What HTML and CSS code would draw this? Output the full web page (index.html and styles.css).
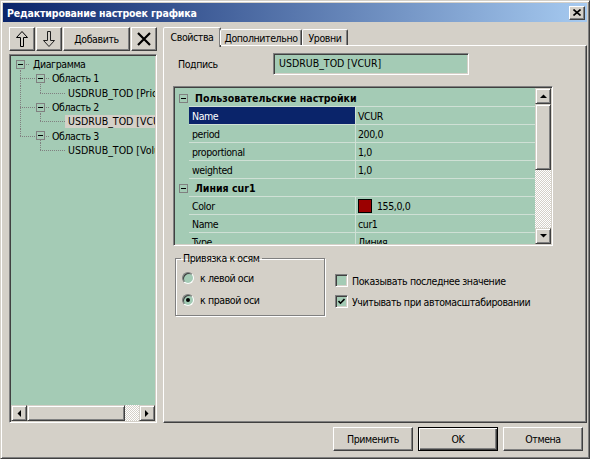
FILE: index.html
```html
<!DOCTYPE html>
<html>
<head>
<meta charset="utf-8">
<link rel="stylesheet" href="styles.css">
</head>
<body>
<div class="window">
  <div class="titlebar">
    <span class="title">Редактирование настроек графика</span>
    <button class="close" type="button">
      <svg width="8" height="7" viewBox="0 0 8 7"><path d="M0.5 0.5 L7.5 6.5 M7.5 0.5 L0.5 6.5" stroke="#000" stroke-width="1.6" fill="none"/></svg>
    </button>
  </div>

  <div class="main">
    <div class="left">
      <div class="toolbar">
        <button class="btn tb-icon" type="button">
          <svg width="12" height="16" viewBox="0 0 12 16"><polygon points="6,0.5 11.5,6.5 7.5,6.5 7.5,15.5 4.5,15.5 4.5,6.5 0.5,6.5" fill="none" stroke="#000" stroke-width="1"/></svg>
        </button>
        <button class="btn tb-icon" type="button">
          <svg width="12" height="16" viewBox="0 0 12 16"><polygon points="6,15.5 11.5,9.5 7.5,9.5 7.5,0.5 4.5,0.5 4.5,9.5 0.5,9.5" fill="none" stroke="#202020" stroke-width="1"/></svg>
        </button>
        <button class="btn tb-add" type="button">Добавить</button>
        <button class="btn tb-icon" type="button">
          <svg width="14" height="14" viewBox="0 0 14 14"><path d="M1 1 L13 13 M13 1 L1 13" stroke="#000" stroke-width="2.2" fill="none"/></svg>
        </button>
      </div>

      <div class="tree">
        <div class="tree-rows">
          <div class="trow">
            <span class="c0 t-rootexp"><span class="exp"></span></span>
            <span class="ttext root">Диаграмма</span>
          </div>
          <div class="trow">
            <span class="c0 t-tee"></span>
            <span class="c1 t-hexp"><span class="exp"></span></span>
            <span class="ttext">Область 1</span>
          </div>
          <div class="trow">
            <span class="c0 t-v"></span>
            <span class="c1 t-corner"></span>
            <span class="ch t-h"></span>
            <span class="ttext leaf">USDRUB_TOD [Price]</span>
          </div>
          <div class="trow">
            <span class="c0 t-tee"></span>
            <span class="c1 t-hexp"><span class="exp"></span></span>
            <span class="ttext">Область 2</span>
          </div>
          <div class="trow">
            <span class="c0 t-v"></span>
            <span class="c1 t-corner"></span>
            <span class="ch t-h"></span>
            <span class="ttext leaf sel">USDRUB_TOD [VCUR]</span>
          </div>
          <div class="trow">
            <span class="c0 t-corner0"></span>
            <span class="c1 t-hexp"><span class="exp"></span></span>
            <span class="ttext">Область 3</span>
          </div>
          <div class="trow">
            <span class="c0"></span>
            <span class="c1 t-corner"></span>
            <span class="ch t-h"></span>
            <span class="ttext leaf">USDRUB_TOD [Volume]</span>
          </div>
        </div>
        <div class="hscroll">
          <span class="sbtn"><svg width="4" height="7" viewBox="0 0 4 7"><polygon points="4,0 4,7 0.5,3.5" fill="#000"/></svg></span>
          <span class="hthumb"></span>
          <span class="track"></span>
          <span class="sbtn"><svg width="4" height="7" viewBox="0 0 4 7"><polygon points="0,0 0,7 3.5,3.5" fill="#000"/></svg></span>
        </div>
      </div>
    </div>

    <div class="right">
      <div class="tabs">
        <span class="tab active">Свойства</span>
        <span class="tab t2">Дополнительно</span>
        <span class="tab t3">Уровни</span>
      </div>
      <div class="panel">
        <div class="caption-row">
          <span class="label">Подпись</span>
          <div class="textbox">USDRUB_TOD [VCUR]</div>
        </div>

        <div class="grid">
          <div class="grid-body">
            <div class="prow cat">
              <span class="gutter"><span class="exp"></span></span>
              <span class="cat-name">Пользовательские настройки</span>
            </div>
            <div class="prow">
              <span class="gutter"></span>
              <span class="pname selected">Name</span>
              <span class="pval">VCUR</span>
            </div>
            <div class="prow">
              <span class="gutter"></span>
              <span class="pname">period</span>
              <span class="pval">200,0</span>
            </div>
            <div class="prow">
              <span class="gutter"></span>
              <span class="pname">proportional</span>
              <span class="pval">1,0</span>
            </div>
            <div class="prow">
              <span class="gutter"></span>
              <span class="pname">weighted</span>
              <span class="pval">1,0</span>
            </div>
            <div class="prow cat">
              <span class="gutter"><span class="exp"></span></span>
              <span class="cat-name">Линия cur1</span>
            </div>
            <div class="prow">
              <span class="gutter"></span>
              <span class="pname">Color</span>
              <span class="pval"><span class="swatch"></span>155,0,0</span>
            </div>
            <div class="prow">
              <span class="gutter"></span>
              <span class="pname">Name</span>
              <span class="pval">cur1</span>
            </div>
            <div class="prow">
              <span class="gutter"></span>
              <span class="pname">Type</span>
              <span class="pval">Линия</span>
            </div>
          </div>
          <div class="vscroll">
            <span class="sbtn"><svg width="7" height="4" viewBox="0 0 7 4"><polygon points="0,4 7,4 3.5,0.5" fill="#000"/></svg></span>
            <span class="vthumb"></span>
            <span class="track"></span>
            <span class="sbtn"><svg width="7" height="4" viewBox="0 0 7 4"><polygon points="0,0 7,0 3.5,3.5" fill="#000"/></svg></span>
          </div>
        </div>

        <div class="options">
          <fieldset class="group">
            <legend>Привязка к осям</legend>
            <div class="opt"><span class="radio"></span><span>к левой оси</span></div>
            <div class="opt"><span class="radio checked"></span><span>к правой оси</span></div>
          </fieldset>
          <div class="checks">
            <div class="opt"><span class="check"></span><span>Показывать последнее значение</span></div>
            <div class="opt"><span class="check">
              <svg width="7" height="7" viewBox="0 0 7 7"><path d="M0.5 3 L2.5 5.2 L6.5 1" stroke="#000" stroke-width="1.6" fill="none"/></svg>
            </span><span>Учитывать при автомасштабировании</span></div>
          </div>
        </div>
      </div>
    </div>
  </div>

  <div class="footer">
    <button class="btn fbtn" type="button">Применить</button>
    <button class="btn fbtn default" type="button">OK</button>
    <button class="btn fbtn" type="button">Отмена</button>
  </div>
</div>
</body>
</html>
```

FILE: styles.css
```css
:root {
  --face: #d4d0c8;
  --green: #a4cbb5;
  --line: #cfe0d5;
  --vd: repeating-linear-gradient(to bottom, #808080 0 1px, transparent 1px 2px);
  --hd: repeating-linear-gradient(to right, #808080 0 1px, transparent 1px 2px);
}

* { box-sizing: border-box; }

body {
  margin: 0;
  font-family: "DejaVu Sans Condensed", "Liberation Sans", Arial, sans-serif;
  font-size: 10.5px;
  letter-spacing: -0.4px;
  color: #000;
  background: #fff;
}

.window {
  width: 590px;
  height: 459px;
  background: var(--face);
  border: 1px solid;
  border-color: var(--face) #404040 #404040 var(--face);
  box-shadow: inset 1px 1px 0 #fff, inset -1px -1px 0 #808080;
  padding: 2px;
  display: flex;
  flex-direction: column;
}

/* title bar */
.titlebar {
  flex: none;
  height: 19px;
  display: flex;
  align-items: center;
  padding: 0 2px 0 4px;
  background: linear-gradient(to right, #0a246a, #a6caf0);
}
.title {
  flex: 1;
  color: #fff;
  font-weight: bold;
  letter-spacing: -0.15px;
  white-space: nowrap;
}
.close {
  width: 16px;
  height: 14px;
  padding: 0;
  display: flex;
  align-items: center;
  justify-content: center;
  background: var(--face);
  border: 1px solid;
  border-color: #fff #404040 #404040 #fff;
  box-shadow: inset -1px -1px 0 #808080;
}

/* generic raised button */
.btn {
  font: inherit;
  letter-spacing: inherit;
  color: #000;
  padding: 0;
  background: var(--face);
  border: 1px solid;
  border-color: #fff #404040 #404040 #fff;
  box-shadow: inset -1px -1px 0 #808080;
  display: flex;
  align-items: center;
  justify-content: center;
}

/* main area */
.main {
  flex: none;
  height: 396px;
  margin-top: 5px;
  padding-left: 6px;
  display: flex;
}

.left {
  width: 148px;
  display: flex;
  flex-direction: column;
}
.toolbar {
  height: 24px;
  display: flex;
  gap: 1px;
}
.tb-icon { width: 26px; height: 24px; }
.tb-add { width: 67px; height: 24px; }

/* sunken fields */
.tree, .textbox, .grid {
  border: 1px solid;
  border-color: #808080 #fff #fff #808080;
  box-shadow: inset 1px 1px 0 #404040, inset -1px -1px 0 var(--face);
}

.tree {
  flex: 1;
  margin-top: 3px;
  background: var(--green);
  padding: 1px;
  display: flex;
  flex-direction: column;
  overflow: hidden;
}
.tree-rows {
  flex: 1;
  padding-top: 1px;
  overflow: hidden;
}
.trow {
  height: 14.33px;
  display: flex;
  align-items: stretch;
  white-space: nowrap;
}
.c0 { flex: none; width: 19px; --x: 9px; display: flex; align-items: center; padding-left: 5px; }
.c1 { flex: none; width: 20px; --x: 10px; display: flex; align-items: center; padding-left: 6px; }
.ch { flex: none; width: 16px; }
.ttext {
  display: flex;
  align-items: center;
  padding: 0 2px;
  height: 13px;
  align-self: center;
}
.ttext.leaf { letter-spacing: 0; }
.ttext.root { margin-left: 1px; }
.ttext.sel { background: var(--face); margin-left: -1px; padding-left: 3px; }

.exp {
  width: 9px;
  height: 9px;
  border: 1px solid #808080;
  background: linear-gradient(#000, #000) center / 5px 1px no-repeat, var(--green);
}

.t-v {
  background: var(--vd) var(--x) 0 / 1px 100% no-repeat;
}
.t-tee {
  background:
    var(--vd) var(--x) 0 / 1px 100% no-repeat,
    var(--hd) var(--x) 7px / 100% 1px no-repeat;
}
.t-corner, .t-corner0 {
  background:
    var(--vd) var(--x) 0 / 1px 7px no-repeat,
    var(--hd) var(--x) 7px / 100% 1px no-repeat;
}
.t-rootexp {
  background:
    var(--vd) var(--x) 7px / 1px 100% no-repeat,
    var(--hd) var(--x) 7px / 100% 1px no-repeat;
}
.t-hexp {
  background:
    var(--vd) var(--x) 7px / 1px 100% no-repeat,
    var(--hd) 0 7px / 100% 1px no-repeat;
}
.t-h {
  background: var(--hd) 0 7px / 100% 1px no-repeat;
}

/* scrollbars */
.sbtn {
  flex: none;
  width: 16px;
  height: 16px;
  display: flex;
  align-items: center;
  justify-content: center;
  background: var(--face);
  border: 1px solid;
  border-color: var(--face) #404040 #404040 var(--face);
  box-shadow: inset 1px 1px 0 #fff, inset -1px -1px 0 #808080;
}
.track {
  flex: 1;
  background: repeating-conic-gradient(#fff 0 25%, var(--face) 0 50%) 0 0 / 2px 2px;
}
.hscroll {
  flex: none;
  height: 16px;
  display: flex;
}
.hthumb, .vthumb {
  flex: none;
  background: var(--face);
  border: 1px solid;
  border-color: var(--face) #404040 #404040 var(--face);
  box-shadow: inset 1px 1px 0 #fff, inset -1px -1px 0 #808080;
}
.hthumb { width: 98px; }
.vthumb { height: 66px; }

/* right side */
.right {
  flex: 1;
  margin-left: 6px;
  display: flex;
  flex-direction: column;
}
.tabs {
  flex: none;
  height: 18px;
  display: flex;
  align-items: flex-end;
  position: relative;
  z-index: 1;
}
.tab {
  height: 16px;
  display: flex;
  align-items: center;
  justify-content: center;
  border: 1px solid;
  border-bottom: none;
  border-color: #fff #404040 transparent #fff;
  box-shadow: inset -1px 0 0 #808080;
  border-radius: 2px 2px 0 0;
  background: var(--face);
  white-space: nowrap;
}
.tab.active {
  width: 58px;
  height: 20px;
  margin-bottom: -2px;
  padding-bottom: 2px;
  margin-right: -1px;
}
.tab.t2 { width: 82px; }
.tab.t3 { width: 46px; }
.panel {
  flex: 1;
  border: 1px solid;
  border-color: #fff #404040 #404040 #fff;
  box-shadow: inset -1px -1px 0 #808080;
  display: flex;
  flex-direction: column;
}

.caption-row {
  margin-top: 7px;
  padding-left: 14px;
  display: flex;
  align-items: center;
}
.label { width: 95px; }
.textbox {
  width: 196px;
  height: 22px;
  background: var(--green);
  padding: 3px 5px 0;
  letter-spacing: 0;
  white-space: nowrap;
}

/* property grid */
.grid {
  margin-top: 11px;
  margin-left: 9px;
  width: 380px;
  height: 160px;
  padding: 1px;
  background: var(--green);
  display: flex;
}
.grid-body {
  flex: 1;
  padding-top: 1px;
  overflow: hidden;
}
.prow {
  height: 18px;
  display: flex;
  border-bottom: 1px solid var(--line);
  white-space: nowrap;
}
.gutter {
  flex: none;
  width: 14px;
  display: flex;
  align-items: center;
  padding-left: 4px;
  background: var(--green);
  margin-bottom: -1px;
}
.cat-name {
  font-weight: bold;
  letter-spacing: 0;
  padding-left: 6px;
  display: flex;
  align-items: center;
}
.pname {
  flex: none;
  width: 167px;
  border-right: 1px solid var(--line);
  padding-left: 3px;
  display: flex;
  align-items: center;
}
.pname.selected {
  background: #0a246a;
  color: #fff;
}
.pval {
  flex: 1;
  padding-left: 2px;
  display: flex;
  align-items: center;
}
.swatch {
  width: 14px;
  height: 14px;
  background: #9b0000;
  border: 1px solid #000;
  margin-right: 5px;
}
.vscroll {
  flex: none;
  width: 16px;
  display: flex;
  flex-direction: column;
}

/* options */
.options {
  margin-top: 6px;
  display: flex;
  align-items: flex-start;
}
.group {
  margin: 0 0 0 11px;
  width: 150px;
  padding: 6px 0 8px 6px;
  border: 1px solid #808080;
  box-shadow: inset 1px 1px 0 #fff, 1px 1px 0 #fff;
}
.group legend {
  padding: 0 2px;
  margin-left: -1px;
  line-height: 13px;
}
.opt {
  height: 14px;
  display: flex;
  align-items: center;
  gap: 6px;
  white-space: nowrap;
}
.group .opt + .opt { margin-top: 8px; }
.radio {
  width: 12px;
  height: 12px;
  border-radius: 50%;
  border: 1px solid;
  border-color: #808080 #fff #fff #808080;
  box-shadow: inset 1px 1px 0 #404040;
  background: var(--green);
  display: flex;
  align-items: center;
  justify-content: center;
}
.radio.checked::after {
  content: "";
  width: 4px;
  height: 4px;
  border-radius: 50%;
  background: #000;
}
.checks {
  margin-left: 10px;
  padding-top: 22px;
}
.checks .opt { height: 13px; gap: 4px; }
.checks .opt + .opt { margin-top: 8px; }
.check {
  width: 13px;
  height: 13px;
  border: 1px solid;
  border-color: #808080 #fff #fff #808080;
  box-shadow: inset 1px 1px 0 #404040, inset -1px -1px 0 var(--face);
  background: var(--green);
  display: flex;
  align-items: center;
  justify-content: center;
}

/* footer */
.footer {
  flex: none;
  margin-top: 4px;
  height: 24px;
  display: flex;
  justify-content: flex-end;
  gap: 5px;
  padding-right: 4px;
}
.fbtn { width: 80px; height: 24px; }
.fbtn.default {
  border-color: #000;
  box-shadow: inset 1px 1px 0 #fff, inset -1px -1px 0 #404040, inset -2px -2px 0 #808080;
}
```
